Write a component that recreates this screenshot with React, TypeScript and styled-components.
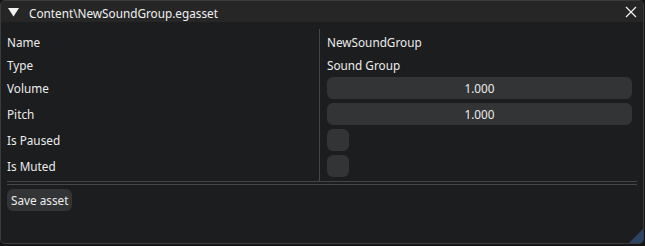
import React from "react";
import styled, { createGlobalStyle } from "styled-components";

const GlobalStyle = createGlobalStyle`
  html, body {
    margin: 0;
    padding: 0;
    background: #151515;
  }
  body {
    font-family: "Noto Sans", "Open Sans", sans-serif;
    font-size: 11.75px;
    color: #ececec;
  }
`;

const Page = styled.div`
  width: 645px;
  height: 246px;
`;

const Window = styled.div`
  position: relative;
  box-sizing: border-box;
  width: 644px;
  height: 244px;
  border: 1px solid #3b3b3d;
  border-radius: 5px;
  background: #1c1d1f;
  overflow: hidden;
  display: flex;
  flex-direction: column;
`;

const TitleBar = styled.div`
  height: 21px;
  background: #262627;
  display: flex;
  align-items: center;
  padding: 0 6px;
  flex-shrink: 0;
`;

const TitleText = styled.span`
  align-self: flex-start;
  margin-left: 10px;
  flex: 1;
  padding-top: 4px;
  line-height: 17px;
  color: #f0f0f0;
`;

const IconButton = styled.span`
  display: flex;
  width: 12px;
  height: 12px;
  align-items: center;
  justify-content: center;
`;

const Content = styled.div`
  padding: 7px 6px 0 6px;
  display: flex;
  flex-direction: column;
`;

const Table = styled.div`
  display: grid;
  grid-template-columns: 312px 1fr;
  column-gap: 1px;
  padding-bottom: 2px;
  background: linear-gradient(#46464a, #46464a) no-repeat 312px 0 / 1px 100%;
`;

const LabelCell = styled.div<{ $frame?: boolean }>`
  box-sizing: border-box;
  height: ${(p) => (p.$frame ? "26px" : "23px")};
  padding-top: ${(p) => (p.$frame ? "2px" : "3px")};
  line-height: ${(p) => (p.$frame ? "23px" : "21px")};
  white-space: nowrap;
`;

const ValueCell = styled(LabelCell)`
  padding-left: 7px;
  padding-right: 5px;
`;

const Slider = styled.div`
  height: 22px;
  border-radius: 6px;
  background: #333436;
  text-align: center;
  line-height: 23px;
`;

const Checkbox = styled.div`
  width: 22px;
  height: 22px;
  border-radius: 6px;
  background: #333436;
`;

const Rule = styled.div<{ $gap: number }>`
  height: 1px;
  background: #46464a;
  margin-top: ${(p) => p.$gap}px;
`;

const Button = styled.div`
  align-self: flex-start;
  margin-top: 4px;
  height: 22px;
  line-height: 23px;
  padding: 0 4px;
  border-radius: 6px;
  background: #333436;
`;

const Grip = styled.svg`
  position: absolute;
  right: 0;
  bottom: 0;
`;

const rows: { label: string; kind: "text" | "slider" | "check"; value?: string }[] = [
  { label: "Name", kind: "text", value: "NewSoundGroup" },
  { label: "Type", kind: "text", value: "Sound Group" },
  { label: "Volume", kind: "slider", value: "1.000" },
  { label: "Pitch", kind: "slider", value: "1.000" },
  { label: "Is Paused", kind: "check" },
  { label: "Is Muted", kind: "check" },
];

export default function App() {
  return (
    <Page>
      <GlobalStyle />
      <Window>
        <TitleBar>
          <IconButton>
            <svg width="11" height="10" viewBox="0 0 11 10">
              <polygon points="0,1 11,1 5.5,9.5" fill="#f2f2f2" />
            </svg>
          </IconButton>
          <TitleText>Content\NewSoundGroup.egasset</TitleText>
          <IconButton>
            <svg width="12" height="12" viewBox="0 0 12 12">
              <path d="M1 1 L11 11 M11 1 L1 11" stroke="#f2f2f2" strokeWidth="1.2" />
            </svg>
          </IconButton>
        </TitleBar>
        <Content>
          <Table>
            {rows.map((r) => {
              const frame = r.kind !== "text";
              return (
                <React.Fragment key={r.label}>
                  <LabelCell $frame={frame}>{r.label}</LabelCell>
                  <ValueCell $frame={frame}>
                    {r.kind === "text" && r.value}
                    {r.kind === "slider" && <Slider>{r.value}</Slider>}
                    {r.kind === "check" && <Checkbox />}
                  </ValueCell>
                </React.Fragment>
              );
            })}
          </Table>
          <Rule $gap={0} />
          <Rule $gap={2} />
          <Button>Save asset</Button>
        </Content>
        <Grip width="14" height="14" viewBox="0 0 14 14">
          <polygon points="14,0 14,14 0,14" fill="#2b4566" />
        </Grip>
      </Window>
    </Page>
  );
}
